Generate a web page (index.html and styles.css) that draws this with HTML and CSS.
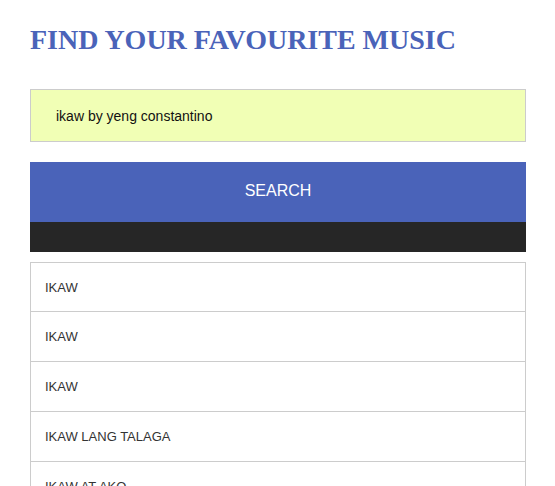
FILE: index.html
```html
<!DOCTYPE html>
<html>
<head>
<meta charset="utf-8">
<link rel="stylesheet" href="styles.css">
</head>
<body>
<div class="app">
  <h1 class="title">FIND YOUR FAVOURITE MUSIC</h1>
  <div class="search-box">ikaw by yeng constantino</div>
  <button class="search-btn">SEARCH</button>
  <div class="dark-bar"></div>
  <ul class="results">
    <li class="item">IKAW</li>
    <li class="item">IKAW</li>
    <li class="item">IKAW</li>
    <li class="item">IKAW LANG TALAGA</li>
    <li class="item">IKAW AT AKO</li>
  </ul>
</div>
</body>
</html>
```
FILE: styles.css
```css
html, body {
  margin: 0;
  padding: 0;
  background: #fff;
  overflow: hidden;
}
.app {
  width: 496px;
  padding: 24px 0 0 30px;
  font-family: "Liberation Sans", Arial, sans-serif;
}
.title {
  margin: 0;
  font-family: "Liberation Serif", "Times New Roman", serif;
  font-weight: bold;
  font-size: 28px;
  line-height: 32px;
  color: #4a63b9;
}
.search-box {
  margin-top: 33px;
  height: 51px;
  border: 1px solid #cccccc;
  background: #f1ffb5;
  box-sizing: content-box;
  padding: 0 0 0 25px;
  display: flex;
  align-items: center;
  font-size: 14px;
  color: #111;
}
.search-btn {
  display: block;
  margin-top: 20px;
  width: 100%;
  height: 60px;
  border: 0;
  background: #4a63b9;
  color: #fff;
  font-family: "Liberation Sans", Arial, sans-serif;
  font-size: 16px;
  padding: 0 0 3px 0;
}
.dark-bar {
  height: 30px;
  background: #262626;
}
.results {
  list-style: none;
  margin: 10px 0 0 0;
  padding: 0;
  border: 1px solid #cccccc;
  border-bottom: 0;
}
.item {
  height: 49px;
  border-bottom: 1px solid #cccccc;
  padding-left: 14px;
  display: flex;
  align-items: center;
  font-size: 13px;
  color: #333;
}
.item:first-child {
  height: 48px;
}
```
